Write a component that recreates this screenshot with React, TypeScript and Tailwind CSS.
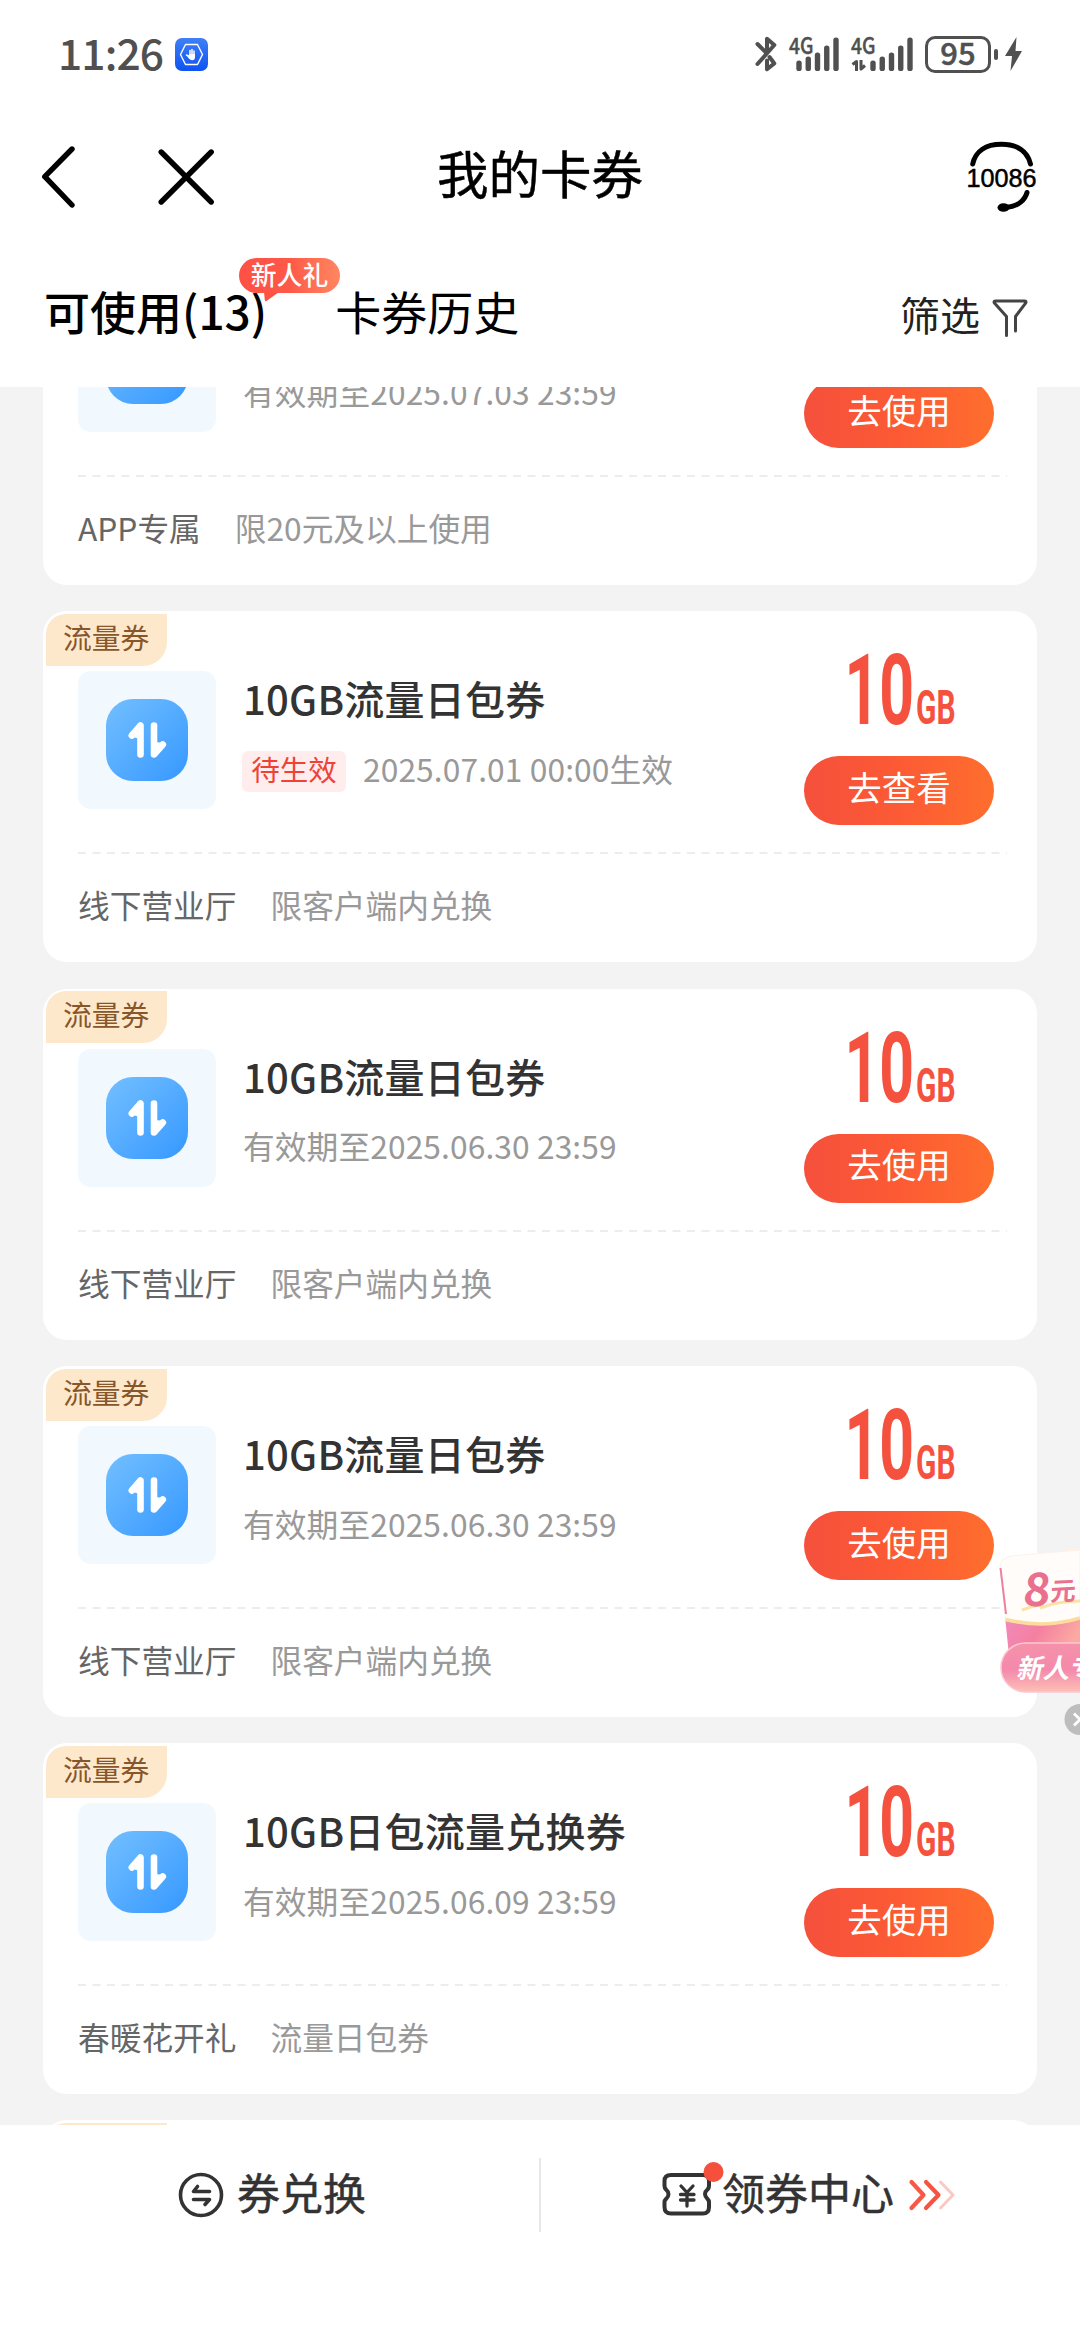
import React from "react";

type Coupon = {
  title: string;
  date: string;
  pending?: boolean;
  action: string;
  source: string;
  note: string;
};

const coupons: Coupon[] = [
  { title: "", date: "有效期至2025.07.03 23:59", action: "去使用", source: "APP专属", note: "限20元及以上使用" },
  { title: "10GB流量日包券", date: "2025.07.01 00:00生效", pending: true, action: "去查看", source: "线下营业厅", note: "限客户端内兑换" },
  { title: "10GB流量日包券", date: "有效期至2025.06.30 23:59", action: "去使用", source: "线下营业厅", note: "限客户端内兑换" },
  { title: "10GB流量日包券", date: "有效期至2025.06.30 23:59", action: "去使用", source: "线下营业厅", note: "限客户端内兑换" },
  { title: "10GB日包流量兑换券", date: "有效期至2025.06.09 23:59", action: "去使用", source: "春暖花开礼", note: "流量日包券" },
];

function Signal({ arrows }: { arrows?: boolean }) {
  const x0 = arrows ? 22 : 10;
  const tops = [23.5, 19.5, 15.5, 8.5, 0.5];
  return (
    <svg className="overflow-visible" width={arrows ? 64 : 52} height="35" viewBox={arrows ? "0 0 64 35" : "0 0 52 35"} fill="#505050">
      <text x="0" y="16.5" fontSize="22.5" fontWeight="500" fontFamily="Noto Sans CJK SC, sans-serif" stroke="#505050" strokeWidth=".4" textLength="24.5" lengthAdjust="spacingAndGlyphs">4G</text>
      {tops.map((t, i) => (
        <rect key={i} x={x0 - 2.7 + i * 9.25} y={t} width="5.4" height={34 - t} rx="2.6" />
      ))}
      {arrows && (
        <g fill="none" stroke="#505050" strokeWidth="3" strokeLinejoin="round">
          <path d="M1.5 27.500 L5.500 24.500 V34" />
          <path d="M10 23 V32 L14 28.500" />
        </g>
      )}
    </svg>
  );
}

function StatusBar() {
  return (
    <div className="flex h-[108px] shrink-0 items-center pl-[58px] pr-[58px]">
      <span className="-mt-[4px] w-[117px] text-[42.5px] leading-none font-medium tracking-[-0.9px] text-[#505050]">11:26</span>
      <svg width="33" height="33" viewBox="0 0 33 33">
        <defs>
          <linearGradient id="blueApp" x1="0" y1="0" x2="0" y2="1">
            <stop offset="0" stopColor="#3f80f8" />
            <stop offset="1" stopColor="#0f53f2" />
          </linearGradient>
        </defs>
        <rect width="33" height="33" rx="7" fill="url(#blueApp)" />
        <path d="M10.5 6.5 H22.5 L27.5 16.5 L22.5 26.5 H10.5 L5.5 16.5 Z" fill="none" stroke="#fff" strokeWidth="1.4" strokeLinejoin="round" />
        <path d="M11.5 17 L14.5 18.5 M15 18 V12.5 M17 18 V11.5 M19 18 V13" stroke="#fff" strokeWidth="1.5" strokeLinecap="round" />
        <path d="M11.5 17 L14 18 V16 H20 V20 Q19.500 22.500 17 22.300 Q14 22 11.500 17 Z" fill="#fff" />
      </svg>
      <div className="ml-auto flex items-center">
        <svg width="22" height="36" viewBox="0 0 22 36" fill="none" stroke="#505050" strokeWidth="4" strokeLinecap="round" strokeLinejoin="round">
          <path d="M2.500 8 L11.500 17 M2.500 28 L19.300 9 L12 2.800 V17" />
          <path d="M14.500 21 L19.300 27.500 L12 33.200 V24.500" />
        </svg>
        <div className="ml-[12px] flex"><Signal /></div>
        <div className="ml-[10px] flex"><Signal arrows /></div>
        <div className="ml-[10px] flex h-[37px] w-[66px] items-center justify-center rounded-[10px] border-[3px] border-[#505050] text-[31px] leading-none font-medium text-[#505050]">
          <span className="-mt-[5px] [-webkit-text-stroke:0.5px_#505050]">95</span>
        </div>
        <div className="ml-[3px] h-[11px] w-[4px] rounded-[2px] bg-[#505050]" />
        <svg className="ml-[7px]" width="17" height="34" viewBox="0 0 17 34" fill="#505050">
          <path d="M11.500 0 L0 19 H7 L5.500 34 L17 14 H10.500 Z" />
        </svg>
      </div>
    </div>
  );
}

function TitleBar() {
  return (
    <div className="flex h-[132px] shrink-0 items-center justify-between pl-[42px] pr-[42px]">
      <div className="flex w-[220px] items-center pt-[5px]">
        <svg width="33" height="64" viewBox="0 0 33 64" fill="none" stroke="#000" strokeWidth="5.400" strokeLinecap="round" strokeLinejoin="round">
          <path d="M30 4 L2.800 31.700 L30 60" />
        </svg>
        <svg className="ml-[83px]" width="58" height="58" viewBox="0 0 58 58" fill="none" stroke="#000" strokeWidth="5.400" strokeLinecap="round">
          <path d="M3.200 4 L53.200 54 M53.200 4 L3.200 54" />
        </svg>
      </div>
      <h1 className="-mt-[5px] text-[51.5px] leading-none font-normal text-black [-webkit-text-stroke:0.5px_#000]">我的卡券</h1>
      <div className="flex w-[220px] justify-end pt-[4px]">
        <svg className="overflow-visible" width="73" height="72" viewBox="0 0 73 72" fill="none" stroke="#000" strokeWidth="5" strokeLinecap="round">
          <path d="M7.700 24 C10.500 11 21 4.300 36.500 4.300 C52 4.300 62.500 11 65.500 24" />
          <text x="1.500" y="47" fontSize="25.200" fontFamily="Liberation Sans, sans-serif" fill="#000" stroke="#000" strokeWidth=".5">10086</text>
          <path d="M62 52.500 C60 60 53 66.500 42 67.200" />
          <ellipse cx="38.500" cy="67.500" rx="6" ry="4.300" fill="#000" stroke="none" />
        </svg>
      </div>
    </div>
  );
}

function Tabs() {
  return (
    <div className="flex h-[147px] shrink-0 items-center pr-[52px] pl-[44px]">
      <div className="relative -mt-[8px] text-[46px] leading-none font-medium whitespace-nowrap text-black">
        可使用(13)
        <div className="absolute -top-[28.500px] left-[195px] z-10">
          <div className="flex h-[35px] w-[101px] items-center justify-center rounded-full bg-linear-to-r from-[#fe5146] via-[#fe5848] to-[#ff8660] text-[25.8px] leading-none font-medium text-white">
            <span className="-mt-[4px]">新人礼</span>
          </div>
          <svg className="ml-[24px] -mt-px" width="17" height="10" viewBox="0 0 17 10">
            <path d="M1 0 H16 L3.500 9 Q1.800 9.500 1.800 8 Z" fill="#fb5244" />
          </svg>
        </div>
      </div>
      <div className="-mt-[8px] ml-[68px] text-[46px] leading-none whitespace-nowrap text-black">卡券历史</div>
      <div className="ml-auto flex items-center">
        <span className="text-[40px] leading-none text-[#222]">筛选</span>
        <svg className="mt-[9px] ml-[12px]" width="36" height="39" viewBox="0 0 36 39" fill="none" stroke="#444" strokeWidth="3" strokeLinecap="round" strokeLinejoin="round">
          <path d="M14.500 36.500 V17.500 L2.200 3.800 Q1.600 2 3.500 2 H32.500 Q34.500 2 33.800 3.800 L23.500 17.500 V32" />
        </svg>
      </div>
    </div>
  );
}

function DataIcon() {
  return (
    <div className="mt-[60px] flex size-[138px] shrink-0 items-center justify-center rounded-[13px] bg-[#f1f8fe]">
      <div className="flex size-[82px] items-center justify-center rounded-[27px] bg-linear-to-br from-[#72bfff] to-[#3498ff]">
        <svg width="40" height="38" viewBox="0 0 40 38" fill="none" stroke="#fff" strokeWidth="6.600" strokeLinecap="round" strokeLinejoin="round">
          <path d="M4.800 14.500 L13.500 4.500 V33.500" />
          <path d="M27 4.500 V33.500 L35.800 23.500" />
          <path d="M8 15.500 L13 10 V17 Z M27.500 29 V22 L33 22.500 Z" fill="#fff" strokeWidth="2" />
        </svg>
      </div>
    </div>
  );
}

function CouponTag() {
  return (
    <div className="absolute top-[2.700px] left-[2.700px] flex h-[52px] w-[121px] items-center justify-center rounded-tl-[20px] rounded-br-[24px] bg-[#fee8cc] text-[28.800px] leading-none text-[#87562a]">
      <span className="-mt-[5px]">流量券</span>
    </div>
  );
}

function CouponCard({ c }: { c: Coupon }) {
  return (
    <article className="relative flex h-[351px] shrink-0 flex-col rounded-[24px] bg-white">
      {c.title && <CouponTag />}
      <div className="flex h-[241px] pr-[43px] pl-[35px]">
        <DataIcon />
        <div className="ml-[27px] flex flex-col whitespace-nowrap">
          <h2 className="mt-[57px] flex h-[60px] items-center text-[40px] leading-none font-medium tracking-[0.25px] text-[#333]">{c.title}</h2>
          <div className="mt-[23px] flex h-[41px] items-center">
            {c.pending && (
              <span className="mr-[17px] -ml-px flex h-[41px] w-[104px] items-center justify-center rounded-[6px] bg-[#ffeded] text-[28.500px] leading-none text-[#ee4237]">
                <span className="-mt-[6px]">待生效</span>
              </span>
            )}
            <span className="-mt-[6px] text-[31.700px] leading-none tracking-[0.12px] text-[#999]">{c.date}</span>
          </div>
        </div>
        <div className="ml-auto flex w-[190px] flex-col">
          {c.title ? (
            <svg className="mt-[32px] overflow-visible" width="190" height="93" viewBox="0 0 190 93" fill="#f5513f" fontFamily="Roboto, sans-serif" fontWeight="700">
              <text transform="translate(40.500 80.500) scale(.62 1)" fontSize="98">10</text>
              <text transform="translate(112 80.500) scale(.630 1)" fontSize="47.500">GB</text>
            </svg>
          ) : (
            <div className="mt-[32px] h-[93px]" />
          )}
          <button className="mt-[20px] flex h-[69px] w-[190px] items-center justify-center rounded-full bg-linear-to-r from-[#f5503c] via-[#fc5a34] to-[#ff6e2d] text-[34.500px] leading-none text-white">
            <span className="-mt-[9px]">{c.action}</span>
          </button>
        </div>
      </div>
      <svg className="ml-[35px] shrink-0" width="929" height="2" viewBox="0 0 929 2">
        <path d="M0 1 H929" stroke="#e8e8e8" strokeWidth="1.300" strokeDasharray="8 6.500" />
      </svg>
      <div className="flex h-[102px] items-center pl-[35px] text-[31.700px] leading-none">
        <span className="text-[#666]">{c.source}</span>
        <span className="ml-[34px] text-[#999]">{c.note}</span>
      </div>
    </article>
  );
}

function BottomBar() {
  return (
    <div className="flex h-[215px] shrink-0 bg-white pt-[33px] text-[43px] leading-none text-[#333]">
      <div className="flex h-[74px] w-[541px] items-center border-r-2 border-[#e8e8e8] pl-[178px]">
        <svg width="46" height="46" viewBox="0 0 46 46" fill="none" stroke="#333" strokeWidth="3.600" strokeLinecap="round" strokeLinejoin="round">
          <circle cx="23" cy="23" r="20.500" />
          <path d="M31.500 19.500 H15.500 L19.500 14.500 M15.500 27.500 H31.500 L27 32.500" />
        </svg>
        <span className="-mt-[7px] ml-[13px] whitespace-nowrap [-webkit-text-stroke:0.5px_#333]">券兑换</span>
      </div>
      <div className="flex h-[74px] w-[539px] items-center pl-[121px]">
        <svg className="-mt-[11px]" width="62" height="58" viewBox="0 0 62 58" fill="none" stroke="#333" strokeWidth="4" strokeLinecap="round" strokeLinejoin="round">
          <path d="M9 14 H41 Q47 14 47 20 V25 Q47 27 45.500 28.500 Q40.500 32.500 45.500 38 Q47 39.500 47 41 V46 Q47 52.500 41 52.500 H9 Q2.500 52.500 2.500 46 V41 Q2.500 39.500 4 38 Q9 33 4 28.500 Q2.500 27 2.500 25 V20 Q2.500 14 9 14 Z" />
          <path strokeWidth="3.300" d="M19 25 L25 31.500 L31 25 M25 31.500 V45 M18.500 33.500 H32 M18.500 39 H32" />
          <circle cx="51.500" cy="11" r="10" fill="#f4503c" stroke="none" />
        </svg>
        <span className="-mt-[7px] -ml-[2px] whitespace-nowrap [-webkit-text-stroke:0.5px_#333]">领券中心</span>
        <svg className="ml-[14px]" width="48" height="32" viewBox="0 0 48 32" fill="none" strokeWidth="4.200" strokeLinecap="round" strokeLinejoin="round">
          <path d="M3.500 3 L15.500 16 L3.500 29" stroke="#fa5846" />
          <path d="M18 3 L30.500 16 L18 29" stroke="#f65342" />
          <path d="M32.500 3 L45 16 L32.500 29" stroke="#fbc9c4" strokeWidth="3" />
        </svg>
      </div>
    </div>
  );
}

function Promo() {
  return (
    <div className="absolute top-[1540px] right-0 h-[200px] w-[84px] overflow-hidden">
      <svg width="84" height="200" viewBox="0 0 84 200">
        <defs>
          <linearGradient id="body" x1="0" y1="0" x2="1" y2=".3">
            <stop offset="0" stopColor="#f08abb" />
            <stop offset=".5" stopColor="#f580a0" />
            <stop offset="1" stopColor="#fbaaa2" />
          </linearGradient>
          <linearGradient id="pill" x1="0" y1="0" x2="0" y2="1">
            <stop offset="0" stopColor="#f592aa" />
            <stop offset=".55" stopColor="#f489ac" />
            <stop offset="1" stopColor="#fcc0b6" />
          </linearGradient>
        </defs>
        <path d="M60 12 L84 6 V20 H50 Z" fill="#fdf0e4" />
        <path d="M4 27 Q3 19 15 16 L84 10 V110 H13 Z" fill="#fffcf9" stroke="#fdf1ea" strokeWidth="1" />
        <path d="M4.500 28 L10 74" stroke="#ee7f9f" strokeWidth="2" />
        <path d="M9.500 81 Q50 90 84 79 V115 H13 Z" fill="url(#body)" />
        <path d="M9.500 79.500 Q50 89 84 78" fill="none" stroke="#fbdc9c" strokeWidth="3.500" />
        <path d="M26 70 Q36 66 48 64 M44 68 Q62 61 84 61" fill="none" stroke="#fbe3a8" strokeWidth="3" />
        <g fill="#ea708f" fontFamily="Noto Sans CJK SC, sans-serif" fontWeight="700">
          <text transform="translate(26 66) skewX(-6)" fontSize="46">8</text>
          <text transform="translate(54 61) rotate(-3) skewX(-6)" fontSize="25.500">元</text>
        </g>
        <rect x="5" y="103" width="110" height="49" rx="24.500" fill="url(#pill)" stroke="#fbc6d2" strokeWidth="1.500" />
        <text transform="translate(20 138) skewX(-12)" fontSize="26.500" fontWeight="700" fill="#fff" fontFamily="Noto Sans CJK SC, sans-serif">新人专</text>
        <circle cx="84" cy="179.500" r="15.500" fill="#bdbdbd" />
        <path d="M78 173.500 L90 185.500 M90 173.500 L78 185.500" stroke="#fff" strokeWidth="2.800" />
      </svg>
    </div>
  );
}

export default function App() {
  return (
    <div className='relative flex h-[2340px] w-[1080px] flex-col overflow-hidden bg-white font-["Noto_Sans_CJK_SC",sans-serif]'>
      <StatusBar />
      <TitleBar />
      <Tabs />
      <main className="flex h-[1738px] shrink-0 flex-col overflow-hidden bg-[#f3f3f3] px-[43px]">
        <div className="-mt-[153px] flex flex-col gap-[26.300px]">
          {coupons.map((c, i) => (
            <CouponCard key={i} c={c} />
          ))}
          <div className="relative h-[60px] shrink-0 rounded-t-[24px] bg-white">
            <div className="absolute top-[2.700px] left-[2.700px] h-[52px] w-[121px] rounded-tl-[20px] bg-[#fee8cc]" />
          </div>
        </div>
      </main>
      <BottomBar />
      <Promo />
    </div>
  );
}
